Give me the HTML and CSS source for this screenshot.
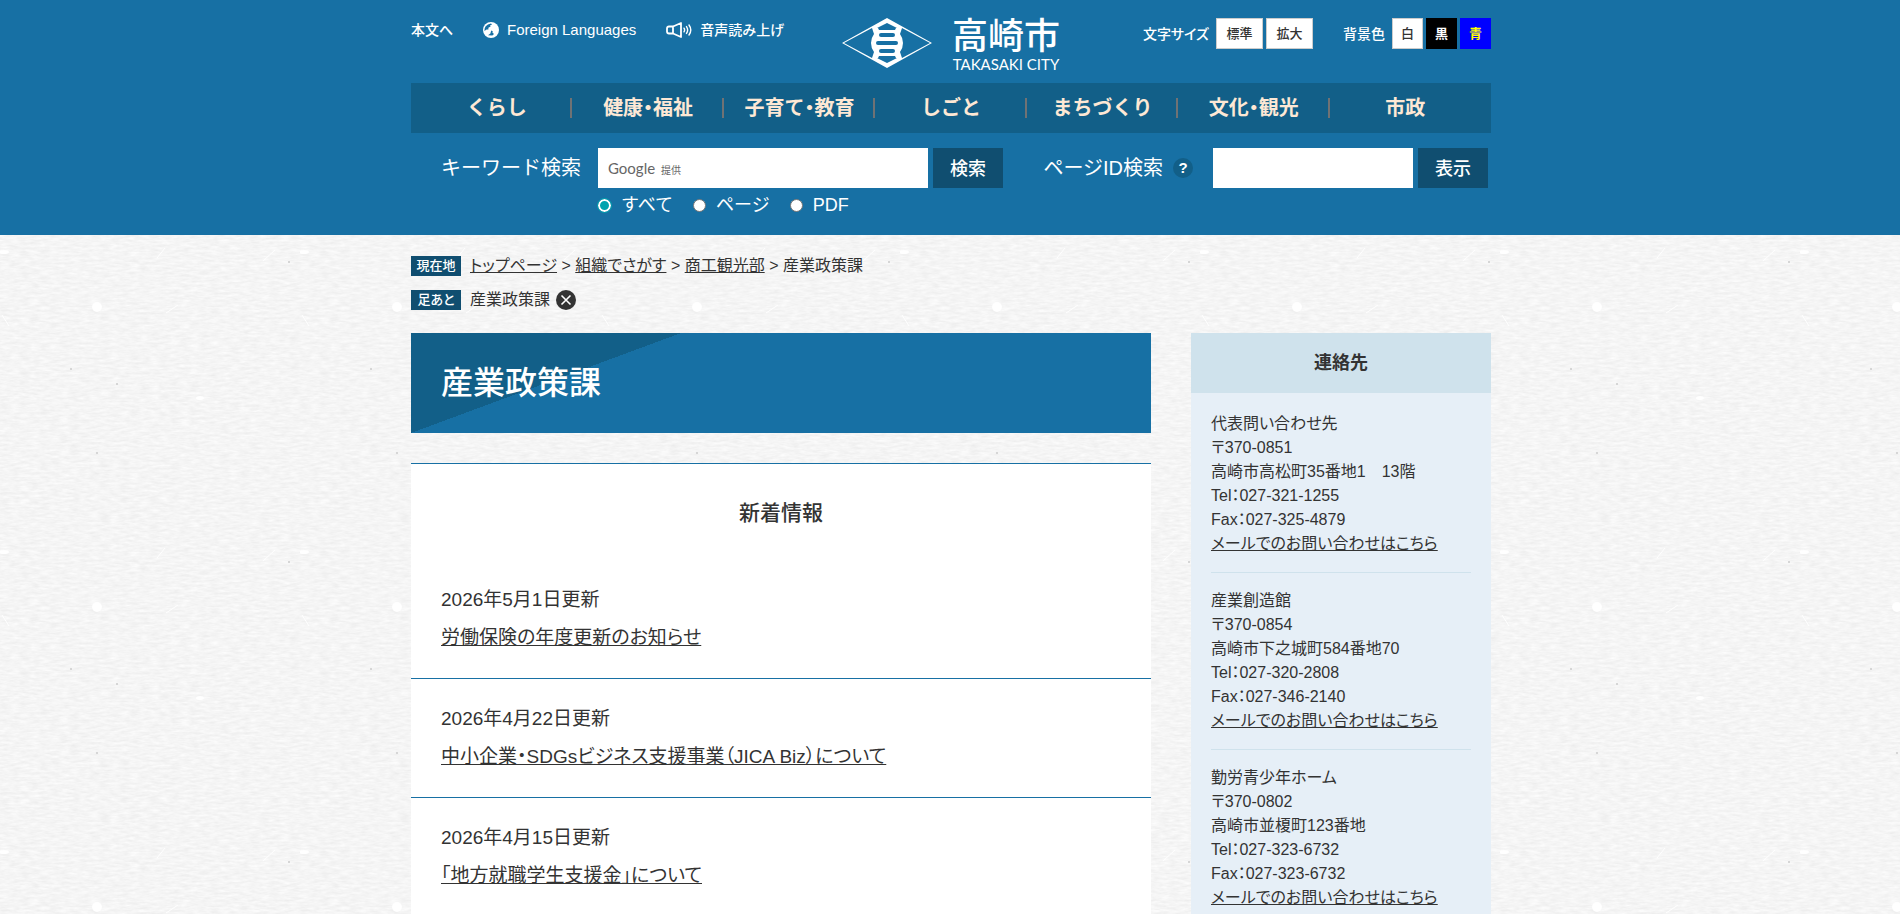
FILE: index.html
```html
<!DOCTYPE html>
<html lang="ja">
<head>
  <meta charset="UTF-8">
  <meta name="viewport" content="width=device-width, initial-scale=1.0">
  <title>産業政策課 - 高崎市</title>
  <link rel="stylesheet" href="styles.css">
</head>
<body>
  <header class="site-header">
    <div class="container">
      <div class="header-top">
        <ul class="header-links">
          <li><a href="#main">本文へ</a></li>
          <li>
            <a class="foreign" href="#">
              <svg class="icon-globe" viewBox="0 0 16 16" aria-hidden="true">
                <circle cx="8" cy="8" r="8" fill="#fff"/>
                <path d="M2.5 4.5 Q4.5 1.8 8 1.5 L9 2.6 L7 3.4 L7.6 4.6 L5.4 5.8 L5.4 7.4 L3.6 7.6 L1.4 9 Q1.4 6 2.5 4.5 Z M8.2 8.4 L9.8 9.2 L9.4 10.6 L11 12 L9.4 13.6 L5 13.2 L7.4 11.4 Z" fill="#1770a4"/>
              </svg>
              Foreign Languages
            </a>
          </li>
          <li>
            <a href="#">
              <svg class="icon-speaker" viewBox="0 0 26 16" fill="none" stroke="#fff" stroke-linecap="round" aria-hidden="true">
                <path d="M7 4.5 L15 1 V15 L7 11.5 H3 Q1 11.5 1 9.5 V6.5 Q1 4.5 3 4.5 Z M7 4.5 V11.5" stroke-width="1.8" stroke-linejoin="round"/>
                <path d="M18 6.2 Q19.2 8 18 9.8 M20.5 4.6 Q22.8 8 20.5 11.4 M23 3 Q26.6 8 23 13" stroke-width="1.4"/>
              </svg>
              音声読み上げ
            </a>
          </li>
        </ul>

        <a class="logo" href="#">
          <svg class="logo-mark" viewBox="0 0 90 50" fill="#fff" aria-hidden="true">
            <path fill-rule="evenodd" d="M45 0 L90 25 L45 50 L0 25 Z M45 5 L35 10 H55 Z M45 45 L35 40 H55 Z M30 10 L2 25 L30 40 L32 34 Q29 30 29 25 Q29 20 32 16 Z M60 10 L88 25 L60 40 L58 34 Q61 30 61 25 Q61 20 58 16 Z"/>
            <g fill="#1770a4">
              <path d="M36 10 H54 L53 12 H37 Z"/>
              <rect x="37" y="15" width="16" height="4" rx="2"/>
              <rect x="34" y="23" width="22" height="4" rx="2"/>
              <rect x="37" y="31" width="16" height="4" rx="2"/>
              <path d="M37 38 H53 L54 40 H36 Z"/>
            </g>
          </svg>
          <span class="logo-text">
            <span class="logo-name">高崎市</span>
            <span class="logo-roman">TAKASAKI CITY</span>
          </span>
        </a>

        <div class="header-tools">
          <div class="tool-group">
            <span class="tool-label">文字サイズ</span>
            <button type="button" class="tool-button size">標準</button>
            <button type="button" class="tool-button size">拡大</button>
          </div>
          <div class="tool-group colors">
            <span class="tool-label">背景色</span>
            <button type="button" class="tool-button">白</button>
            <button type="button" class="tool-button black">黒</button>
            <button type="button" class="tool-button blue">青</button>
          </div>
        </div>
      </div>

      <nav class="global-nav">
        <a href="#">くらし</a>
        <a href="#">健康・福祉</a>
        <a href="#">子育て・教育</a>
        <a href="#">しごと</a>
        <a href="#">まちづくり</a>
        <a href="#">文化・観光</a>
        <a href="#">市政</a>
      </nav>

      <div class="search-area">
        <form class="keyword-search">
          <label class="search-label" for="keyword">キーワード検索</label>
          <div class="search-fields">
            <div class="search-line">
              <div class="keyword-box">
                <input type="text" id="keyword" name="q">
                <span class="google-mark"><b>Google</b> 提供</span>
              </div>
              <button type="submit" class="search-button">検索</button>
            </div>
            <div class="search-options">
              <label><input type="radio" name="type" checked>すべて</label>
              <label><input type="radio" name="type">ページ</label>
              <label><input type="radio" name="type">PDF</label>
            </div>
          </div>
        </form>
        <form class="id-search">
          <label class="search-label" for="page-id">ページID検索</label>
          <a class="help" href="#">?</a>
          <div class="search-line">
            <input type="text" id="page-id" name="page_id">
            <button type="submit" class="search-button">表示</button>
          </div>
        </form>
      </div>
    </div>
  </header>

  <div class="container">
    <div class="topic-path">
      <span class="path-label">現在地</span>
      <p><a href="#">トップページ</a> &gt; <a href="#">組織でさがす</a> &gt; <a href="#">商工観光部</a> &gt; 産業政策課</p>
    </div>
    <div class="topic-path">
      <span class="path-label">足あと</span>
      <p>産業政策課</p>
      <button type="button" class="path-delete" aria-label="削除">
        <svg viewBox="0 0 20 20" aria-hidden="true">
          <circle cx="10" cy="10" r="10" fill="#333"/>
          <path d="M5.5 5.5 L14.5 14.5 M14.5 5.5 L5.5 14.5" stroke="#fff" stroke-width="1.6"/>
        </svg>
      </button>
    </div>

    <div class="columns">
      <main id="main">
        <h1 class="page-title">産業政策課</h1>
        <section class="news">
          <h2>新着情報</h2>
          <ul class="news-list">
            <li>
              <span>2026年5月1日更新</span>
              <a href="#">労働保険の年度更新のお知らせ</a>
            </li>
            <li>
              <span>2026年4月22日更新</span>
              <a href="#">中小企業・SDGsビジネス支援事業（JICA Biz）について</a>
            </li>
            <li>
              <span>2026年4月15日更新</span>
              <a href="#">「地方就職学生支援金」について</a>
            </li>
          </ul>
        </section>
      </main>

      <aside class="contact">
        <h2>連絡先</h2>
        <div class="contact-body">
          <p>
            代表問い合わせ先<br>
            〒370-0851<br>
            高崎市高松町35番地1　13階<br>
            Tel：027-321-1255<br>
            Fax：027-325-4879<br>
            <a href="#">メールでのお問い合わせはこちら</a>
          </p>
          <p>
            産業創造館<br>
            〒370-0854<br>
            高崎市下之城町584番地70<br>
            Tel：027-320-2808<br>
            Fax：027-346-2140<br>
            <a href="#">メールでのお問い合わせはこちら</a>
          </p>
          <p>
            勤労青少年ホーム<br>
            〒370-0802<br>
            高崎市並榎町123番地<br>
            Tel：027-323-6732<br>
            Fax：027-323-6732<br>
            <a href="#">メールでのお問い合わせはこちら</a>
          </p>
        </div>
      </aside>
    </div>
  </div>
</body>
</html>
```
FILE: styles.css
```css
* {
  box-sizing: border-box;
}
body {
  margin: 0;
  color: #333;
  font-family: "Liberation Sans", "Noto Sans CJK JP", sans-serif;
  font-size: 16px;
  line-height: 24px;
  font-feature-settings: "palt";
  background-color: #f5f5f5;
  /* paper texture */
  background-image: url("data:image/svg+xml,%3Csvg xmlns='http://www.w3.org/2000/svg' width='300' height='300'%3E%3Cfilter id='n' x='0' y='0' width='100%25' height='100%25' color-interpolation-filters='sRGB'%3E%3CfeTurbulence type='fractalNoise' baseFrequency='.1 .4' numOctaves='3' seed='4' stitchTiles='stitch'/%3E%3CfeColorMatrix values='.08 0 0 0 .92 .08 0 0 0 .92 .08 0 0 0 .92 0 0 0 0 1'/%3E%3C/filter%3E%3Crect width='300' height='300' filter='url(%23n)'/%3E%3Cg fill='%23fff'%3E%3Ccircle cx='97' cy='7' r='5'/%3E%3Cellipse cx='4' cy='252' rx='5' ry='2'/%3E%3Cellipse cx='200' cy='98' rx='4' ry='2'/%3E%3C/g%3E%3Cg stroke='%23fff' fill='none'%3E%3Cpath d='M263 261L275 250M2 15L9 26M157 258L165 248M166 13L178 5'/%3E%3C/g%3E%3Cg fill='%23ccc'%3E%3Ccircle cx='71' cy='69' r='1'/%3E%3Ccircle cx='117' cy='84' r='1'/%3E%3Ccircle cx='97' cy='153' r='1'/%3E%3Ccircle cx='289' cy='262' r='1'/%3E%3C/g%3E%3C/svg%3E");
}
a {
  color: inherit;
}
ul {
  list-style: none;
  margin: 0;
  padding: 0;
}
h1, h2, p {
  margin: 0;
}
button, input {
  font-family: inherit;
  font-feature-settings: inherit;
}
button {
  cursor: pointer;
}
.container {
  max-width: 1082px;
  margin: 0 auto;
  padding-left: 2px;
}

/* header */
.site-header {
  background-color: #1770a4;
  color: #fff;
  padding-bottom: 16px;
}
.header-top {
  display: grid;
  grid-template-columns: 1fr auto 1fr;
  padding: 18px 0 11px;
}
.header-links {
  display: flex;
  gap: 30px;
  font-size: 14px;
  font-weight: 500;
  font-feature-settings: normal;
}
.header-links a {
  display: flex;
  align-items: center;
  gap: 8px;
  text-decoration: none;
}
.header-links .foreign {
  font-size: 15px;
}
.icon-globe {
  width: 16px;
  height: 16px;
}
.icon-speaker {
  width: 26px;
  height: 16px;
}
.logo {
  display: flex;
  gap: 20px;
  text-decoration: none;
}
.logo-mark {
  width: 90px;
  height: 50px;
}
.logo-text {
  display: flex;
  flex-direction: column;
  align-items: center;
}
.logo-name {
  font-size: 36px;
  line-height: 38px;
  font-weight: 500;
  font-feature-settings: normal;
}
.logo-roman {
  font-family: Lato, sans-serif;
  font-size: 15px;
  line-height: 16px;
}
.header-tools {
  display: flex;
  justify-content: flex-end;
  align-items: flex-start;
  gap: 30px;
  font-size: 14px;
  font-weight: 500;
}
.tool-group {
  display: flex;
  align-items: center;
  gap: 3px;
}
.tool-label {
  margin-right: 4px;
}
.tool-button {
  width: 31px;
  height: 31px;
  padding: 0 0 2px;
  border: 1px solid #ccc;
  background-color: #fff;
  color: #333;
  font-size: 13px;
  font-weight: 500;
}
.tool-button.size {
  width: 47px;
}
.tool-button.black {
  background-color: #000;
  border-color: #000;
  color: #fff;
  font-weight: bold;
}
.tool-button.blue {
  background-color: #00f;
  border-color: #00f;
  color: #ff0;
  font-weight: bold;
}

.global-nav {
  display: flex;
  padding: 0 10px;
  background-color: #125f88;
  font-feature-settings: "halt";
}
.global-nav a {
  position: relative;
  flex: 1;
  color: #fde8d5;
  font-size: 20px;
  line-height: 50px;
  font-weight: bold;
  text-align: center;
  text-decoration: none;
}
.global-nav a:not(:last-child)::after {
  content: "";
  position: absolute;
  top: 15px;
  right: 0;
  width: 2px;
  height: 20px;
  background-color: #707274;
}

.search-area {
  display: flex;
  justify-content: space-between;
  padding: 15px 3px 0 30px;
  font-feature-settings: normal;
}
.keyword-search,
.id-search {
  display: flex;
  align-items: flex-start;
}
.search-label {
  font-size: 20px;
  line-height: 40px;
}
.keyword-search .search-label {
  min-width: 157px;
}
.search-line {
  display: flex;
  gap: 5px;
}
.search-line input {
  width: 200px;
  height: 40px;
  padding: 0 10px;
  border: none;
  border-radius: 0;
  font-size: 16px;
}
.keyword-box {
  position: relative;
}
.keyword-box input {
  width: 330px;
}
.google-mark {
  position: absolute;
  left: 10px;
  top: 0;
  color: #666;
  font-size: 10px;
  line-height: 40px;
  pointer-events: none;
}
.google-mark b {
  margin-right: 3px;
  font-family: Lato, sans-serif;
  font-size: 15px;
  font-weight: normal;
}
.search-button {
  width: 70px;
  height: 40px;
  padding: 0 0 2px;
  border: none;
  background-color: #104e70;
  color: #fff;
  font-size: 18px;
  font-weight: 500;
}
.search-options {
  display: flex;
  gap: 20px;
  padding-top: 3px;
  font-size: 18px;
  line-height: 28px;
}
.search-options label {
  display: flex;
  align-items: center;
  gap: 10px;
}
.search-options input {
  appearance: none;
  width: 13px;
  height: 13px;
  margin: 0;
  border: 1px solid #767676;
  border-radius: 50%;
  background-color: #fff;
}
.search-options input:checked {
  border: 2px solid #fff;
  background-color: #00a3af;
  outline: 1px solid #00a3af;
}
.help {
  width: 20px;
  margin: 10px 20px 0 10px;
  border-radius: 50%;
  background-color: #125f88;
  font-size: 15px;
  line-height: 20px;
  font-weight: bold;
  text-align: center;
  text-decoration: none;
}

/* topic path */
.topic-path {
  display: flex;
  align-items: center;
  margin-top: 10px;
}
.site-header + .container {
  padding-top: 9px;
}
.path-label {
  width: 50px;
  margin-right: 9px;
  background-color: #104e70;
  color: #fff;
  font-size: 13px;
  line-height: 20px;
  font-weight: 500;
  text-align: center;
}
.path-delete {
  width: 20px;
  height: 20px;
  margin-left: 6px;
  padding: 0;
  border: none;
  background: none;
}
.path-delete svg {
  display: block;
}

/* contents */
.columns {
  display: flex;
  align-items: flex-start;
  gap: 40px;
  margin-top: 21px;
}
main {
  flex: 1;
}
.page-title {
  padding: 0 30px;
  background-color: #1770a4;
  background-image: linear-gradient(to bottom right, #125f88 50%, transparent 50%);
  background-size: 270px 100%;
  background-repeat: no-repeat;
  color: #fff;
  font-size: 32px;
  line-height: 100px;
  font-weight: 500;
}
.news {
  margin-top: 30px;
  border-top: 1px solid #1770a4;
  background-color: #fff;
}
.news h2 {
  padding: 34px 30px 32px;
  font-size: 21px;
  line-height: 30px;
  font-weight: 500;
  text-align: center;
}
.news-list {
  font-size: 19px;
  line-height: 28px;
}
.news-list li {
  display: flex;
  flex-direction: column;
  align-items: flex-start;
  gap: 10px;
  padding: 26px 30px;
}
.news-list li + li {
  border-top: 1px solid #1770a4;
}
.contact {
  flex: 0 0 300px;
  background-color: #e6eff7;
}
.contact h2 {
  background-color: #cfe2ec;
  font-size: 18px;
  line-height: 60px;
  font-weight: bold;
  text-align: center;
}
.contact-body {
  padding: 3px 20px 0;
}
.contact-body p {
  padding: 16px 0;
}
.contact-body p + p {
  border-top: 1px solid #cfe2ec;
}
```
